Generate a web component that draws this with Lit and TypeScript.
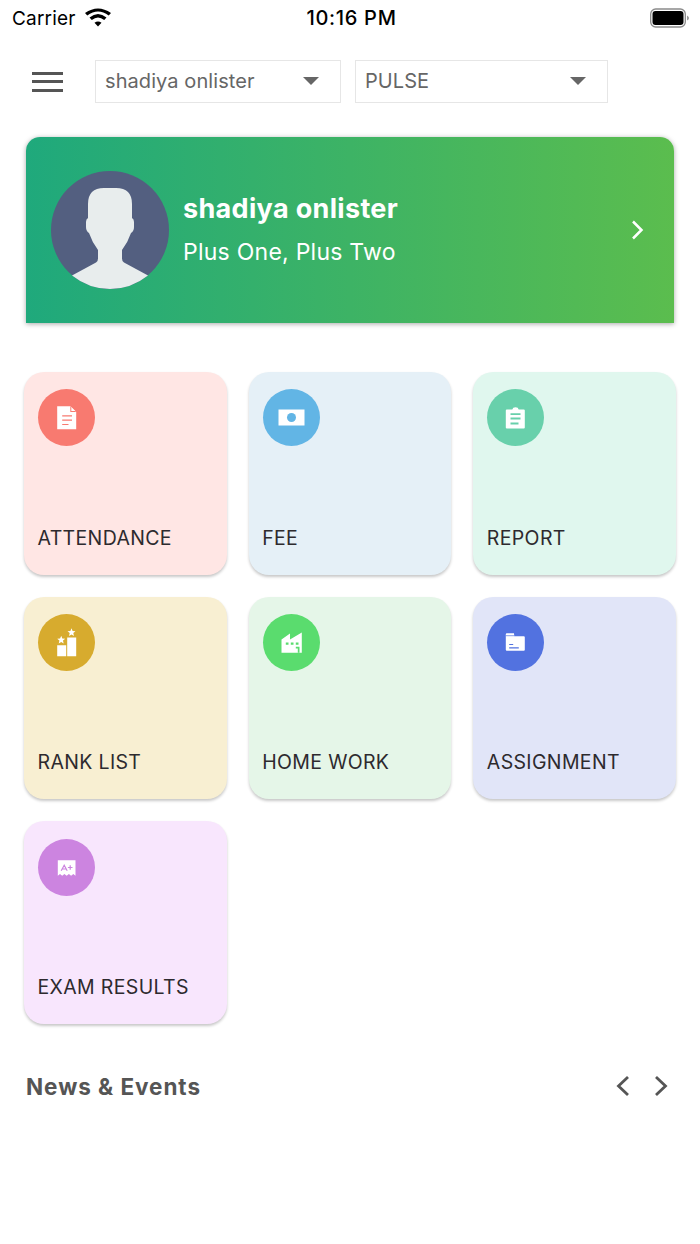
import { LitElement, html, css, svg } from "lit";
import { customElement } from "lit/decorators.js";

const star = (cx: number, cy: number, r: number) => {
  const pts: string[] = [];
  for (let i = 0; i < 10; i++) {
    const rad = i % 2 ? r * 0.45 : r;
    const a = -Math.PI / 2 + (i * Math.PI) / 5;
    pts.push(`${(cx + rad * Math.cos(a)).toFixed(2)},${(cy + rad * Math.sin(a)).toFixed(2)}`);
  }
  return svg`<polygon points=${pts.join(" ")} fill="#fff"/>`;
};

const icons: Record<string, unknown> = {
  doc: svg`<path d="M-9.300-11.300H3.800L9.700-5.400V11.700H-9.300Z" fill="#fff"/><path d="M3.800-11.300V-5.400H9.700Z" fill="#f87a70"/><path d="M4.800-10.500 8.900-6.400H4.800Z" fill="#fff"/><path d="M-4.300-1.700H5.500M-4.300 2.700H5.500M-4.300 7H2" stroke="#f87a70" stroke-width="1.200" fill="none"/>`,
  fee: svg`<path d="M-13-8H13V8H-13Z" fill="#fff"/><circle r="4.5" fill="#62b5e5"/>`,
  report: svg`<path d="M-8.700-8H-3.200Q-2.800-10.200 0-10.200Q2.800-10.200 3.200-8H8.300Q9.300-8 9.300-7V10Q9.300 11 8.300 11H-8.700Q-9.700 11-9.700 10V-7Q-9.700-8-8.700-8Z" fill="#fff"/><path d="M-5-3.300H5M-5 1H5M-5 6H3" stroke="#68d0ab" stroke-width="1.800" fill="none"/>`,
  rank: svg`<path d="M-9.300 2.700H-.300V13.700H-9.300ZM.700-5H9.700V13.700H.700Z" fill="#fff"/>${star(-5.3, -2.5, 4.2)}${star(5, -10, 4.2)}`,
  work: svg`<path d="M-10-3-1.500-9V-3L10.300-10V10.300H-10Z" fill="#fff"/><path d="M-5.700 0H-3V2.300H-5.700ZM-.700 0H2V2.300H-.700ZM4.300 0H7V2.300H4.300Z" fill="#5adc6e"/><path d="M4.300 4.300H8V10.300H6.300V6H4.300Z" fill="#5adc6e"/>`,
  folder: svg`<path d="M-8.700-9.300H-1.500L-1.200-6.300H8.300Q9.300-6.300 9.300-5.300V7.300Q9.300 8.300 8.300 8.300H-8.700Q-9.700 8.300-9.700 7.300V-8.300Q-9.700-9.300-8.700-9.300Z" fill="#fff"/><path d="M-9.700-6.800H-1.200" stroke="#5272e0" stroke-width=".7"/><path d="M-6.300 2H-2.300M-6.300 5.300H3.300" stroke="#5272e0" stroke-width="1.200" fill="none"/>`,
  exam: svg`<path d="M-8.700-7.300H9V8.300L6.800 6.600 4.600 8.300 2.400 6.600.150 8.300-2.100 6.600-4.300 8.300-6.500 6.600-8.700 8.300Z" fill="#fff"/><path d="M-5.300 3.300-2.300-2.300.700 3.300M-4.300 1.500H-.300M1.400 0H6M3.700-2.300V2.300" stroke="#cc84e0" stroke-width="1.200" fill="none"/>`,
};

const tiles = [
  { label: "ATTENDANCE", bg: "#ffe6e4", dot: "#f87a70", icon: "doc" },
  { label: "FEE", bg: "#e5f0f7", dot: "#62b5e5", icon: "fee" },
  { label: "REPORT", bg: "#e0f7ee", dot: "#68d0ab", icon: "report" },
  { label: "RANK LIST", bg: "#f8efd2", dot: "#d7ab2e", icon: "rank" },
  { label: "HOME WORK", bg: "#e5f6e8", dot: "#5adc6e", icon: "work" },
  { label: "ASSIGNMENT", bg: "#e1e5f8", dot: "#5272e0", icon: "folder" },
  { label: "EXAM RESULTS", bg: "#f8e6fd", dot: "#cc84e0", icon: "exam" },
];

@customElement("app-root")
export class AppRoot extends LitElement {
  static styles = css`
    :host { display: block; width: 700px; height: 1244px; background: #fff; overflow: hidden; font-family: Inter, "Liberation Sans", sans-serif; }
    .status { height: 36px; display: grid; grid-template-columns: 1fr auto 1fr; align-items: center; padding: 0 8px 0 12px; color: #000; }
    .carrier { display: flex; align-items: center; gap: 9px; font-size: 19px; letter-spacing: .2px; }
    .time { font-size: 20px; font-weight: 500; letter-spacing: .7px; margin-left: -1px; }
    .battery { justify-self: end; display: block; }
    .top { display: flex; align-items: center; margin-top: 24px; padding-left: 32px; height: 43px; }
    .burger { width: 31px; height: 20px; display: flex; flex-direction: column; justify-content: space-between; margin-right: 32px; }
    .burger i { display: block; height: 3px; background: #555; }
    .select { height: 43px; box-sizing: border-box; border: 1px solid #e6e6e6; display: flex; align-items: center; justify-content: space-between; font-size: 20px; letter-spacing: .08px; color: #666; padding: 0 21px 2px 9px; }
    .s1 { width: 246px; margin-right: 14px; }
    .s2 { width: 253px; }
    .caret { width: 0; height: 0; border-left: 8.5px solid transparent; border-right: 8.500px solid transparent; border-top: 8.500px solid #666; }
    .hero { margin: 34px 26px 0; height: 186px; border-radius: 14px 14px 0 0; background: linear-gradient(90deg, #1fa97c, #5bbd4e); box-shadow: 0 1px 5px rgba(0,0,0,.35); display: flex; align-items: center; padding: 0 29px 0 25px; color: #fff; }
    .avatar { width: 118px; height: 118px; margin-right: 14px; flex: none; display: block; }
    .info { flex: 1; padding-bottom: 2px; }
    .name { font-size: 27px; font-weight: 700; line-height: 34px; letter-spacing: .33px; }
    .cls { font-size: 23px; line-height: 28px; margin-top: 12px; letter-spacing: .25px; }
    .grid { display: grid; grid-template-columns: repeat(3, 1fr); gap: 22px; margin: 49px 24px 0; }
    .tile { aspect-ratio: 1; box-sizing: border-box; border-radius: 20px; padding: 17.200px 14px 23px; display: flex; flex-direction: column; justify-content: space-between; box-shadow: 0 2px 3px rgba(0,0,0,.22); }
    .dot { width: 57px; height: 57px; border-radius: 50%; display: block; }
    .label { font-size: 19.500px; line-height: 28px; color: #2d2a2e; letter-spacing: .35px; margin-left: -.5px; }
    .news { display: flex; align-items: center; justify-content: space-between; margin: 45px 30px 0 26px; height: 34px; }
    .news h2 { margin: 0; font-size: 22.500px; font-weight: 700; color: #555; letter-spacing: .95px; }
    .arrows { display: flex; gap: 20px; }
    .arrows svg { display: block; }
  `;

  render() {
    return html`
      <div class="status">
        <div class="carrier">Carrier
          <svg width="26" height="20" viewBox="0 0 26 20"><path d="M13 17.500 9.500 13.800Q13 11 16.500 13.800ZM6.800 11 4.500 8.600Q13 1.500 21.500 8.600L19.200 11Q13 6 6.800 11ZM2.300 6.500 0 4Q13-5 26 4L23.700 6.500Q13-1.500 2.300 6.500Z" fill="#000" transform="translate(0 1)"/></svg>
        </div>
        <div class="time">10:16 PM</div>
        <svg class="battery" width="42" height="20" viewBox="0 0 42 20"><rect x=".7" y="1" width="34.600" height="18" rx="5" fill="none" stroke="#8a8a8a" stroke-width="1.300"/><rect x="2.500" y="3" width="31" height="14" rx="3" fill="#000"/><path d="M37 7.500Q39 8.500 39 10T37 12.500Z" fill="#999"/></svg>
      </div>
      <div class="top">
        <div class="burger"><i></i><i></i><i></i></div>
        <div class="select s1"><span>shadiya onlister</span><span class="caret"></span></div>
        <div class="select s2"><span>PULSE</span><span class="caret"></span></div>
      </div>
      <div class="hero">
        <svg class="avatar" viewBox="0 0 118 118">
          <circle cx="59" cy="59" r="59" fill="#535f80"/>
          <path d="M21 104.500 45 91.500Q47 90.500 47 87.500V79Q41 71 38 62Q35 60 35 56V51Q35 48 37 47V33Q37 17 53 17H65Q81 17 81 33V47Q83 48 83 51V56Q83 60 80 62Q77 71 71 79V87.500Q71 90.500 73 91.500L97 104.500Q80 118 59 118Q38 118 21 104.500Z" fill="#e8eded"/>
        </svg>
        <div class="info">
          <div class="name">shadiya onlister</div>
          <div class="cls">Plus One, Plus Two</div>
        </div>
        <svg width="14" height="20" viewBox="0 0 14 20"><path d="M2 1.500 10.500 10 2 18.500" fill="none" stroke="#fff" stroke-width="2.500"/></svg>
      </div>
      <div class="grid">
        ${tiles.map(
          (t) => html`<div class="tile" style="background:${t.bg}">
            <svg class="dot" viewBox="-28.500 -28.500 57 57" style="background:${t.dot}">${icons[t.icon]}</svg>
            <div class="label">${t.label}</div>
          </div>`
        )}
      </div>
      <div class="news">
        <h2>News &amp; Events</h2>
        <div class="arrows">
          <svg width="18" height="24" viewBox="0 0 18 24"><path d="M14 3 4.500 12 14 21" fill="none" stroke="#555" stroke-width="2.800"/></svg>
          <svg width="18" height="24" viewBox="0 0 18 24"><path d="M4 3 13.500 12 4 21" fill="none" stroke="#555" stroke-width="2.800"/></svg>
        </div>
      </div>
    `;
  }
}
